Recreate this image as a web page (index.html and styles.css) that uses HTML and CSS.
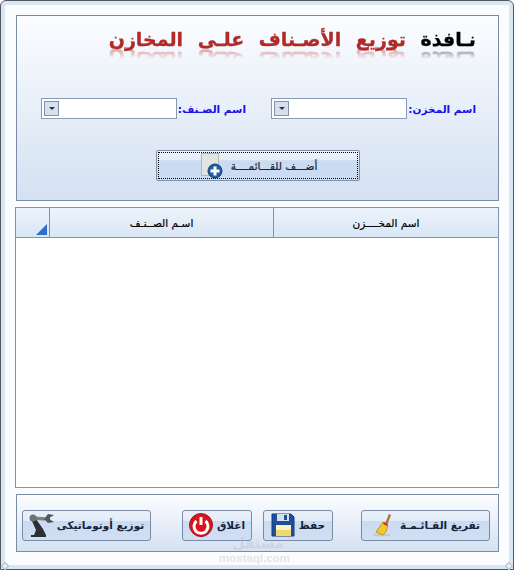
FILE: index.html
```html
<!DOCTYPE html>
<html lang="ar" dir="rtl">
<head>
    <meta charset="UTF-8">
    <title>نافذة توزيع الأصناف على المخازن</title>
    <link rel="stylesheet" href="styles.css">
</head>
<body>
    <div class="window">
        <div class="panel top-panel">
            <h1 class="title"><span class="title-dark">نـافذة</span> <span>توزيع</span> <span>الأصـناف</span> <span>علـى</span> <span>المخازن</span></h1>

            <div class="form-row">
                <div class="field">
                    <label class="field-label">اسم المخزن:</label>
                    <div class="combo"><span class="combo-arrow"></span></div>
                </div>
                <div class="field">
                    <label class="field-label">اسم الصـنف:</label>
                    <div class="combo"><span class="combo-arrow"></span></div>
                </div>
            </div>

            <button class="add-button">
                <span class="focus-box">
                    <span>أضـــف للقـــائمــــة</span>
                    <svg class="add-icon" viewBox="0 0 24 28" width="24" height="28">
                        <rect x="0.5" y="0.5" width="17" height="22" fill="#e3e3e3" stroke="#b5b5b5"/>
                        <circle cx="14" cy="18" r="7" fill="#1f5f9f" stroke="#123f73"/>
                        <path d="M14 13.500v9M9.500 18h9" stroke="#fff" stroke-width="3"/>
                    </svg>
                </span>
            </button>
        </div>

        <div class="grid">
            <div class="grid-head">
                <div class="head-cell col-store">اسم المخــــزن</div>
                <div class="head-cell col-item">اسـم الصــنـف</div>
                <div class="head-corner"><span class="corner-mark"></span></div>
            </div>
            <div class="grid-body"></div>
        </div>

        <div class="panel bottom-panel">
            <button class="tool-button btn-clear">
                <span>تفريغ القـائـمـة</span>
                <svg viewBox="0 0 22 24" width="22" height="24">
                    <ellipse cx="11" cy="22" rx="9" ry="1.500" fill="#c9c9c0"/>
                    <path d="M18 1l2 1-4 10-2-1z" fill="#b5682a"/>
                    <path d="M12 9l5 3-2 7-3 3-7-3z" fill="#f0c832" stroke="#c49a1a"/>
                    <path d="M12.500 10l4 2" stroke="#c9352a" stroke-width="2"/>
                </svg>
            </button>
            <button class="tool-button btn-save">
                <span>حفظ</span>
                <svg viewBox="0 0 24 24" width="24" height="24">
                    <path d="M1 1h19l3 3v19H1z" fill="#1d4f9e" stroke="#123a7a"/>
                    <rect x="6" y="1" width="12" height="7" fill="#d8dfe8"/>
                    <rect x="13" y="2" width="3" height="5" fill="#1d4f9e"/>
                    <rect x="5" y="12" width="15" height="11" fill="#fbf3c0"/>
                    <rect x="5" y="17" width="15" height="6" fill="#f2d76a"/>
                </svg>
            </button>
            <button class="tool-button btn-close">
                <span>اغلاق</span>
                <svg viewBox="0 0 24 24" width="24" height="24">
                    <circle cx="12" cy="12" r="11.500" fill="#d8141f" stroke="#9d1a22"/>
                    <path d="M7.500 8a7 7 0 1 0 9 0" fill="none" stroke="#fff" stroke-width="3"/>
                    <path d="M12 4v8" stroke="#fff" stroke-width="3"/>
                </svg>
            </button>
            <button class="tool-button btn-auto">
                <span>توزيع أوتوماتيكى</span>
                <svg viewBox="0 0 25 24" width="25" height="24">
                    <path d="M2 24v-2h3l2-5-4-9 4-2 7 10 3 6v2z" fill="#2d3033"/>
                    <path d="M3 5l13 1" stroke="#7d8084" stroke-width="3.500"/>
                    <path d="M15 6l4-5 6 1-4 2.500v2l4 2.500-6 1z" fill="#55585b"/>
                    <circle cx="4" cy="5" r="3.500" fill="#6d7074"/>
                </svg>
            </button>
            <div class="watermark">
                <div class="watermark-ar">مستقل</div>
                <div class="watermark-en">mostaql.com</div>
            </div>
        </div>

        <span class="grip grip-left"></span>
        <span class="grip grip-right"></span>
    </div>
</body>
</html>
```

FILE: styles.css
```css
* {
    margin: 0;
    padding: 0;
    box-sizing: border-box;
    font-family: "DejaVu Sans", "Noto Sans", sans-serif;
}

body {
    width: 514px;
    height: 570px;
    overflow: hidden;
    background: #fff;
}

.window {
    position: relative;
    display: flex;
    flex-direction: column;
    width: 514px;
    height: 570px;
    padding: 14px 14px 17px 14px;
    background: #fafcfe;
    border: 1px solid #50565e;
    border-radius: 6px 6px 0 0;
    box-shadow: inset 0 0 0 4px #d9e6f4;
}

.panel {
    margin-left: 1px;
    border: 1px solid #7b8ba5;
    background: linear-gradient(#fbfdff, #d4e1f2);
}

.top-panel {
    display: flex;
    flex-direction: column;
    align-items: center;
    height: 186px;
    margin-bottom: 6px;
}

.title {
    align-self: flex-start;
    margin-top: 10px;
    margin-right: 22px;
    font-size: 19px;
    line-height: 26px;
    font-weight: 700;
    color: #b12a2a;
    word-spacing: 8px;
    white-space: nowrap;
    -webkit-text-stroke: 0.3px currentColor;
    -webkit-box-reflect: below -6px linear-gradient(transparent 50%, rgba(255, 255, 255, 0.55));
}

.title-dark {
    color: #000;
}

.form-row {
    display: flex;
    align-self: stretch;
    gap: 25px;
    margin-top: 46px;
    padding-right: 22px;
}

.field {
    display: flex;
    align-items: center;
    gap: 3px;
}

.field-label {
    width: 66px;
    font-size: 10.500px;
    font-weight: 700;
    color: #1a10e8;
    white-space: nowrap;
}

.combo {
    display: flex;
    align-items: center;
    justify-content: flex-end;
    width: 136px;
    height: 21px;
    padding: 2px;
    background: #fff;
    border: 1px solid #8a9cb5;
}

.combo-arrow {
    display: flex;
    align-items: center;
    justify-content: center;
    width: 15px;
    height: 15px;
    background: #d5e1f0;
    border: 1px solid #7f93ad;
}

.combo-arrow::after {
    content: "";
    border-top: 3px solid #333;
    border-left: 3px solid transparent;
    border-right: 3px solid transparent;
}

.add-button {
    width: 204px;
    height: 31px;
    margin-top: 31px;
    padding: 1px;
    border: 1px solid #7f8fa8;
    border-radius: 2px;
    background: linear-gradient(#eef4fb 0, #e2ecf8 32%, #cbdbf1 33%, #cbdbf1 100%);
    color: #14233a;
}

.focus-box {
    display: flex;
    align-items: center;
    justify-content: center;
    gap: 6px;
    height: 100%;
    padding-left: 3px;
    border: 1px dotted #000;
    font-size: 10.500px;
    -webkit-text-stroke: 0.2px currentColor;
}

.add-icon {
    margin-top: 2px;
    width: 24px;
    height: 28px;
}

.grid {
    display: flex;
    flex-direction: column;
    flex: 1;
    border: 1px solid #7b93b5;
    background: #fff;
}

.grid-head {
    display: flex;
    height: 30px;
    border-bottom: 1px solid #7b93b5;
    background: linear-gradient(#edf3fb, #d9e6f6);
}

.head-cell {
    display: flex;
    align-items: center;
    justify-content: center;
    font-size: 10.500px;
    color: #000;
    border-left: 1px solid #7b93b5;
    -webkit-text-stroke: 0.2px currentColor;
}

.col-store {
    width: 225px;
}

.col-item {
    width: 224px;
}

.head-corner {
    position: relative;
    flex: 1;
}

.corner-mark {
    position: absolute;
    left: 20px;
    bottom: 2px;
    width: 0;
    height: 0;
    border-bottom: 11px solid #2e6fcb;
    border-left: 11px solid transparent;
}

.grid-body {
    flex: 1;
}

.bottom-panel {
    position: relative;
    display: flex;
    align-items: center;
    height: 58px;
    margin-top: 6px;
    padding: 4px 8px 0 0;
}

.tool-button {
    display: flex;
    align-items: center;
    justify-content: center;
    gap: 7px;
    height: 31px;
    border: 1px solid #7b8ba5;
    border-radius: 3px;
    background: linear-gradient(#e8f0fa 0, #e2ecf8 35%, #cbdbf1 36%, #d0dff3 100%);
    font-size: 10.500px;
    font-weight: 700;
    color: #14233a;
    white-space: nowrap;
}

.btn-clear {
    width: 129px;
}

.btn-save {
    width: 70px;
    margin-right: 28px;
    gap: 4px;
}

.btn-close {
    width: 70px;
    margin-right: 11px;
    gap: 4px;
}

.btn-auto {
    width: 129px;
    margin-right: 31px;
    gap: 3px;
}

.watermark {
    position: absolute;
    left: 209px;
    top: 39px;
    width: 64px;
    color: #b4b9bf;
    opacity: 0.35;
    text-align: center;
    font-weight: 700;
    pointer-events: none;
}

.watermark-ar {
    font-size: 14px;
    line-height: 18px;
}

.watermark-en {
    font-family: "Liberation Sans", sans-serif;
    font-size: 11.500px;
    line-height: 13px;
}

.grip {
    position: absolute;
    bottom: 0;
    width: 6px;
    height: 6px;
    background: #e8eef6;
    border: 1px solid #b0bccb;
    transform: rotate(45deg);
}

.grip-left {
    left: 1px;
}

.grip-right {
    right: 1px;
}
```
